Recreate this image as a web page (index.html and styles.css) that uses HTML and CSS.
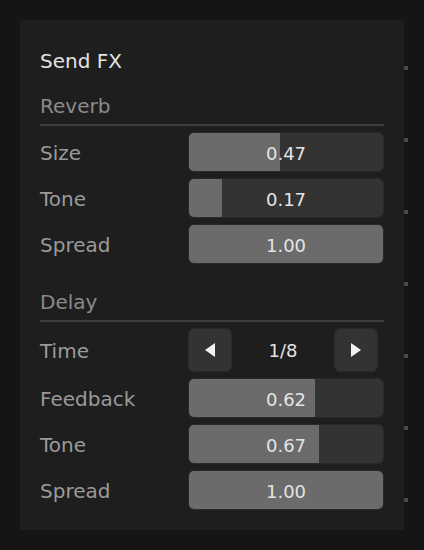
FILE: index.html
```html
<!DOCTYPE html>
<html lang="en">
<head>
  <meta charset="UTF-8" />
  <meta name="viewport" content="width=device-width, initial-scale=1" />
  <title>Send FX</title>
  <link rel="stylesheet" href="styles.css">
</head>
<body>
  <div class="page">
    <section class="panel" aria-label="Send FX">
      <h1 class="title">Send FX</h1>

      <h2 class="group-title">Reverb</h2>
      <div class="rows">
        <div class="row">
          <span class="label">Size</span>
          <div class="slider"><div class="fill" style="width: 47%"></div><span class="value">0.47</span></div>
        </div>
        <div class="row">
          <span class="label">Tone</span>
          <div class="slider"><div class="fill" style="width: 17%"></div><span class="value">0.17</span></div>
        </div>
        <div class="row">
          <span class="label">Spread</span>
          <div class="slider"><div class="fill" style="width: 100%"></div><span class="value">1.00</span></div>
        </div>
      </div>

      <h2 class="group-title delay">Delay</h2>
      <div class="rows">
        <div class="row tall">
          <span class="label">Time</span>
          <div class="stepper">
            <button class="step" aria-label="Previous">
              <svg width="10" height="14" viewBox="0 0 10 14"><path d="M10 0 L10 14 L0 7 Z" fill="#f2f2f2"/></svg>
            </button>
            <span class="step-value">1/8</span>
            <button class="step" aria-label="Next">
              <svg width="10" height="14" viewBox="0 0 10 14"><path d="M0 0 L0 14 L10 7 Z" fill="#f2f2f2"/></svg>
            </button>
          </div>
        </div>
        <div class="row">
          <span class="label">Feedback</span>
          <div class="slider"><div class="fill" style="width: 65%"></div><span class="value">0.62</span></div>
        </div>
        <div class="row">
          <span class="label">Tone</span>
          <div class="slider"><div class="fill" style="width: 67%"></div><span class="value">0.67</span></div>
        </div>
        <div class="row">
          <span class="label">Spread</span>
          <div class="slider"><div class="fill" style="width: 100%"></div><span class="value">1.00</span></div>
        </div>
      </div>
    </section>

    <div class="ticks" aria-hidden="true">
      <span></span><span></span><span></span><span></span><span></span><span></span><span></span>
    </div>
  </div>
</body>
</html>
```

FILE: styles.css
```css
/* Reset and base */
* {
  box-sizing: border-box;
  margin: 0;
  padding: 0;
  font-family: 'DejaVu Sans', 'Liberation Sans', sans-serif;
}
html, body {
  height: 100%;
  background: #151515;
  overflow: hidden;
}

.page {
  display: flex;
  align-items: flex-start;
  padding: 20px 0 0 20px;
}

/* Panel */
.panel {
  width: 384px;
  height: 510px;
  background: #1e1e1e;
  padding: 29px 20px 20px 20px;
  display: flex;
  flex-direction: column;
}
.title {
  font-size: 20px;
  font-weight: normal;
  line-height: 24px;
  color: #e2e2e2;
  margin-bottom: 21px;
}
.group-title {
  font-size: 20px;
  font-weight: normal;
  line-height: 24px;
  color: #8a8a8a;
  padding-bottom: 6px;
  border-bottom: 2px solid #3e3e3e;
  margin-bottom: 6px;
}
.group-title.delay {
  margin-top: 26px;
}

/* Rows */
.rows {
  display: flex;
  flex-direction: column;
  gap: 6px;
}
.row {
  display: grid;
  grid-template-columns: 148px 1fr;
  align-items: center;
  height: 40px;
}
.row.tall {
  height: 44px;
}
.label {
  font-size: 20px;
  line-height: 40px;
  position: relative;
  top: 1px;
  color: #9a9a9a;
}

/* Slider */
.slider {
  position: relative;
  height: 40px;
  background: #333333;
  border: 1px solid #2a2a2a;
  border-radius: 6px;
  overflow: hidden;
  display: flex;
  align-items: center;
  justify-content: center;
}
.fill {
  position: absolute;
  top: 0;
  left: 0;
  bottom: 0;
  background: #6b6b6b;
}
.value {
  position: relative;
  top: 1px;
  font-size: 18px;
  color: #e4e4e4;
}

/* Stepper */
.stepper {
  width: 190px;
  display: flex;
  align-items: center;
  justify-content: space-between;
}
.step {
  width: 44px;
  height: 44px;
  background: #333333;
  border: 1px solid #2a2a2a;
  border-radius: 6px;
  display: flex;
  align-items: center;
  justify-content: center;
  cursor: pointer;
}
.step-value {
  font-size: 18px;
  color: #e4e4e4;
}

/* Tick marks beside the panel */
.ticks {
  display: flex;
  flex-direction: column;
  gap: 68px;
  margin-top: 46px;
}
.ticks span {
  display: block;
  width: 4px;
  height: 4px;
  background: #4a4a4a;
}
```
